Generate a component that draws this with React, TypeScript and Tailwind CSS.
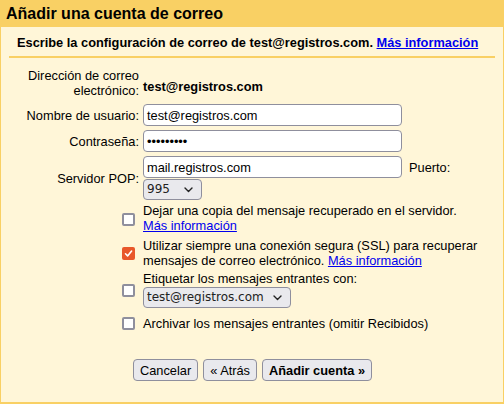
function Checkbox({ checked }: { checked?: boolean }) {
  if (checked) {
    return (
      <span className="flex h-[13px] w-[13px] items-center justify-center rounded-[2px] bg-[#e8572a]">
        <svg width="9" height="9" viewBox="0 0 9 9" fill="none">
          <path d="M1.5 4.8 L3.6 6.9 L7.6 2" stroke="white" strokeWidth="1.6" strokeLinecap="round" strokeLinejoin="round" />
        </svg>
      </span>
    );
  }
  return <span className="block h-[13px] w-[13px] rounded-[2px] border-2 border-[#8f8f9d] bg-white" />;
}

function Chevron() {
  return (
    <svg width="9" height="6" viewBox="0 0 9 6" fill="none">
      <path d="M1 1 L4.5 4.5 L8 1" stroke="#222" strokeWidth="1.4" strokeLinecap="round" strokeLinejoin="round" />
    </svg>
  );
}

function Select({ value, width }: { value: string; width: string }) {
  return (
    <div
      className={`flex h-[21px] ${width} items-center justify-between rounded-[4px] border border-[#8f8f9d] bg-[#e9e9ed] pl-[3px] pr-[8px] text-[12px] text-[#222] font-['DejaVu_Sans',sans-serif]`}
    >
      <span>{value}</span>
      <Chevron />
    </div>
  );
}

function TextInput({ value }: { value: string }) {
  return (
    <div className="flex h-[22px] w-[259px] items-center rounded-[4px] border border-[#8f8f9d] bg-white px-[3px] text-black">
      {value}
    </div>
  );
}

const Link = ({ children, bold }: { children: string; bold?: boolean }) => (
  <a href="#" className={`text-[#0000ee] underline ${bold ? "font-bold" : ""}`}>
    {children}
  </a>
);

export default function App() {
  return (
    <div className="flex h-[404px] w-[504px] flex-col font-['Liberation_Sans',Arial,sans-serif] text-[12.8px] leading-[15px] text-black">
      {/* Header */}
      <div className="flex h-[27px] items-center bg-[#f9d064] px-[6px] text-[16px] font-bold leading-[18px]">
        Añadir una cuenta de correo
      </div>

      {/* Body */}
      <div className="flex flex-1 flex-col border-x border-b-2 border-[#f9d064] bg-[#fff6d8]">
        <div className="pl-[16px] pt-[8px] pb-[6px] font-bold">
          Escribe la configuración de correo de test@registros.com. <Link bold>Más información</Link>
        </div>
        <div className="mx-[8px] h-[2px] bg-[#f9d064]" />

        <div className="grid grid-cols-[130px_1fr] gap-x-[4px] pl-[8px] pt-[10px]">
          {/* Email */}
          <div className="pb-[4px] text-right">
            Dirección de correo
            <br />
            electrónico:
          </div>
          <div className="flex items-center pt-[2px] font-bold">test@registros.com</div>

          {/* Username */}
          <div className="flex items-center justify-end py-[2px]">Nombre de usuario:</div>
          <div className="py-[2px]">
            <TextInput value="test@registros.com" />
          </div>

          {/* Password */}
          <div className="flex items-center justify-end py-[2px]">Contraseña:</div>
          <div className="py-[2px]">
            <TextInput value="•••••••••" />
          </div>

          {/* POP server */}
          <div className="flex items-center justify-end py-[2px]">Servidor POP:</div>
          <div className="flex flex-col gap-[1px] py-[2px]">
            <div className="flex items-center gap-[7px]">
              <TextInput value="mail.registros.com" />
              <span>Puerto:</span>
            </div>
            <Select value="995" width="w-[59px]" />
          </div>

          {/* Leave copy */}
          <div className="flex items-center justify-end pr-[4px] pt-[1px]">
            <Checkbox />
          </div>
          <div className="pt-[1px] pb-[3px]">
            Dejar una copia del mensaje recuperado en el servidor.
            <br />
            <Link>Más información</Link>
          </div>

          {/* SSL */}
          <div className="flex items-center justify-end pr-[4px] py-[2px]">
            <Checkbox checked />
          </div>
          <div className="py-[2px]">
            Utilizar siempre una conexión segura (SSL) para recuperar
            <br />
            mensajes de correo electrónico. <Link>Más información</Link>
          </div>

          {/* Label */}
          <div className="flex items-center justify-end pr-[4px] py-[2px]">
            <Checkbox />
          </div>
          <div className="flex flex-col pt-[1px] pb-[2px]">
            <span>Etiquetar los mensajes entrantes con:</span>
            <div className="pt-[1px]">
              <Select value="test@registros.com" width="w-[148px]" />
            </div>
          </div>

          {/* Archive */}
          <div className="flex items-center justify-end pr-[4px] py-[6px]">
            <Checkbox />
          </div>
          <div className="flex items-center py-[6px]">Archivar los mensajes entrantes (omitir Recibidos)</div>
        </div>

        <div className="flex justify-center gap-[5px] pt-[22px] pl-[1px]">
          <button className="h-[22px] rounded-[4px] border border-[#8f8f9d] bg-[#e9e9ed] px-[6px]">Cancelar</button>
          <button className="h-[22px] rounded-[4px] border border-[#8f8f9d] bg-[#e9e9ed] px-[6px]">« Atrás</button>
          <button className="h-[22px] rounded-[4px] border border-[#8f8f9d] bg-[#e9e9ed] px-[6px] font-bold">
            Añadir cuenta »
          </button>
        </div>
      </div>
    </div>
  );
}
